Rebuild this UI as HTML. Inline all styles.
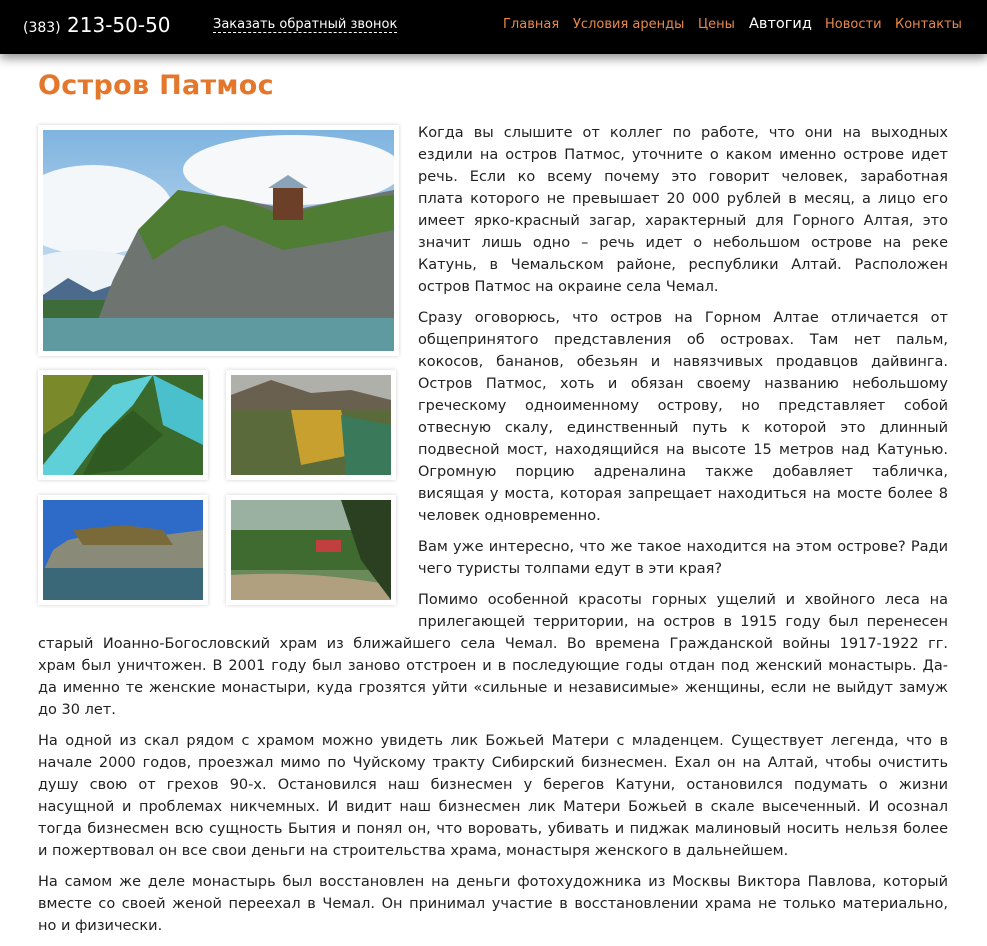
<!DOCTYPE html>
<html><head><meta charset="utf-8">
<style>
*{margin:0;padding:0;box-sizing:border-box}
body{width:987px;height:909px;overflow:hidden;background:#fff;font-family:"DejaVu Sans","Liberation Sans",sans-serif;color:#222}
.hdr{position:absolute;left:0;top:0;width:987px;height:54px;background:#000;box-shadow:0 4px 10px rgba(0,0,0,.45)}
.ph{position:absolute;left:23px;top:13px;color:#fff;font-size:20px}
.ph small{font-size:14px}
.cb{position:absolute;left:213px;top:17px;color:#fff;font-size:13px;border-bottom:1px dashed #fff;line-height:15px}
h1{position:absolute;left:38px;top:70px;font-size:27px;color:#e4772b;font-weight:bold;letter-spacing:.3px}
.c{position:absolute;left:38px;top:122px;width:910px;font-size:14.5px;line-height:22px}
.c p{margin-bottom:9px}
.c p span{display:block;white-space:nowrap;text-align:justify;text-align-last:justify}
.c p span.l{text-align-last:left}
.fl{float:left;width:380px;height:503px;position:relative}
.fr{position:absolute;background:#fff;box-shadow:0 0 4px rgba(0,0,0,.18);padding:5px}
.fr svg{display:block}
.n{position:absolute;color:#e8894a;white-space:nowrap}
</style></head><body>
<div class="hdr">
<div class="ph"><small>(383)</small> 213-50-50</div>
<div class="cb">Заказать обратный звонок</div>
</div>
<div style="position:absolute;top:17px;left:0;font-size:13px;font-family:'DejaVu Sans',sans-serif">
<span class="n" style="left:503px">Главная</span>
<span class="n" style="left:573px">Условия аренды</span>
<span class="n" style="left:698px">Цены</span>
<span class="n" style="left:749px;color:#fff;font-size:14.5px;top:-1px">Автогид</span>
<span class="n" style="left:825px">Новости</span>
<span class="n" style="left:895px">Контакты</span>
</div>
<h1>Остров Патмос</h1>
<div class="c">
<div class="fl">
<div class="fr" style="left:0;top:3px;width:361px;height:231px">
<svg width="351" height="221"><defs><linearGradient id="s" x1="0" y1="0" x2="0" y2="1"><stop offset="0" stop-color="#7fb4e0"/><stop offset="1" stop-color="#e8f0f6"/></linearGradient></defs>
<rect width="351" height="221" fill="url(#s)"/>
<ellipse cx="50" cy="80" rx="80" ry="45" fill="#f4f7fa"/><ellipse cx="250" cy="40" rx="110" ry="35" fill="#f6f8fa"/><ellipse cx="40" cy="150" rx="70" ry="30" fill="#eef3f7"/>
<path d="M0 165 L25 148 L50 162 L70 155 L70 190 L0 190Z" fill="#4b6a8c"/>
<rect x="0" y="170" width="70" height="22" fill="#3d6b3a"/>
<path d="M55 190 L70 150 L95 100 L135 60 L200 70 L250 80 L300 70 L351 60 L351 190Z" fill="#6e7570"/>
<path d="M95 100 L135 60 L200 70 L240 85 L300 70 L351 65 L351 100 L300 110 L240 120 L180 95 L140 110 L110 130Z" fill="#4f7d34"/>
<rect x="230" y="55" width="30" height="35" fill="#6b3f28"/><path d="M225 58 L245 45 L265 58Z" fill="#8aa3b8"/>
<rect x="0" y="188" width="351" height="33" fill="#5f9aa0"/>
</svg></div>
<div class="fr" style="left:0;top:248px;width:170px;height:110px">
<svg width="160" height="100"><rect width="160" height="100" fill="#3a6b2c"/><path d="M0 90 L40 40 L70 10 L110 0 L90 30 L60 60 L30 100 L0 100Z" fill="#5fd0d8"/><path d="M110 0 L160 25 L160 70 L120 50Z" fill="#4ac0cc"/><path d="M60 60 L90 35 L120 60 L80 95 L40 100Z" fill="#2f5a22"/><path d="M0 0 L50 0 L30 40 L0 60Z" fill="#7a8a2a"/></svg></div>
<div class="fr" style="left:188px;top:248px;width:170px;height:110px">
<svg width="160" height="100"><rect width="160" height="100" fill="#5a6a3a"/><rect width="160" height="30" fill="#b0b0aa"/><path d="M0 20 L40 5 L80 18 L120 15 L160 25 L160 35 L0 35Z" fill="#6a6050"/><path d="M60 35 L110 35 L120 80 L70 90Z" fill="#c8a030"/><path d="M110 40 L160 50 L160 100 L115 100Z" fill="#3a7a5a"/></svg></div>
<div class="fr" style="left:0;top:373px;width:170px;height:110px">
<svg width="160" height="100"><rect width="160" height="100" fill="#2e6ac8"/><path d="M25 40 L70 30 L120 35 L160 30 L160 70 L0 72 L10 50Z" fill="#8a8a78"/><path d="M30 30 L80 25 L120 30 L130 45 L40 45Z" fill="#7a6a3a"/><rect y="68" width="160" height="32" fill="#3a6878"/></svg></div>
<div class="fr" style="left:188px;top:373px;width:170px;height:110px">
<svg width="160" height="100"><rect width="160" height="100" fill="#6a8a5a"/><rect width="160" height="30" fill="#9ab0a0"/><path d="M0 30 L160 30 L160 70 L0 70Z" fill="#3f6a30"/><rect x="85" y="40" width="25" height="12" fill="#c04040"/><path d="M0 75 Q80 70 160 85 L160 100 L0 100Z" fill="#b0a080"/><path d="M110 0 L160 0 L160 100 L130 60Z" fill="#2a4020"/></svg></div>
</div>
<p><span>Когда вы слышите от коллег по работе, что они на выходных</span><span>ездили на остров Патмос, уточните о каком именно острове идет</span><span>речь. Если ко всему почему это говорит человек, заработная</span><span>плата которого не превышает 20 000 рублей в месяц, а лицо его</span><span>имеет ярко-красный загар, характерный для Горного Алтая, это</span><span>значит лишь одно – речь идет о небольшом острове на реке</span><span>Катунь, в Чемальском районе, республики Алтай. Расположен</span><span class="l">остров Патмос на окраине села Чемал.</span></p>
<p><span>Сразу оговорюсь, что остров на Горном Алтае отличается от</span><span>общепринятого представления об островах. Там нет пальм,</span><span>кокосов, бананов, обезьян и навязчивых продавцов дайвинга.</span><span>Остров Патмос, хоть и обязан своему названию небольшому</span><span>греческому одноименному острову, но представляет собой</span><span>отвесную скалу, единственный путь к которой это длинный</span><span>подвесной мост, находящийся на высоте 15 метров над Катунью.</span><span>Огромную порцию адреналина также добавляет табличка,</span><span>висящая у моста, которая запрещает находиться на мосте более 8</span><span class="l">человек одновременно.</span></p>
<p><span>Вам уже интересно, что же такое находится на этом острове? Ради</span><span class="l">чего туристы толпами едут в эти края?</span></p>
<p><span>Помимо особенной красоты горных ущелий и хвойного леса на</span><span>прилегающей территории, на остров в 1915 году был перенесен</span><span>старый Иоанно-Богословский храм из ближайшего села Чемал. Во времена Гражданской войны 1917-1922 гг.</span><span>храм был уничтожен. В 2001 году был заново отстроен и в последующие годы отдан под женский монастырь. Да-</span><span>да именно те женские монастыри, куда грозятся уйти «сильные и независимые» женщины, если не выйдут замуж</span><span class="l">до 30 лет.</span></p>
<p><span>На одной из скал рядом с храмом можно увидеть лик Божьей Матери с младенцем. Существует легенда, что в</span><span>начале 2000 годов, проезжал мимо по Чуйскому тракту Сибирский бизнесмен. Ехал он на Алтай, чтобы очистить</span><span>душу свою от грехов 90-х. Остановился наш бизнесмен у берегов Катуни, остановился подумать о жизни</span><span>насущной и проблемах никчемных. И видит наш бизнесмен лик Матери Божьей в скале высеченный. И осознал</span><span>тогда бизнесмен всю сущность Бытия и понял он, что воровать, убивать и пиджак малиновый носить нельзя более</span><span class="l">и пожертвовал он все свои деньги на строительства храма, монастыря женского в дальнейшем.</span></p>
<p><span>На самом же деле монастырь был восстановлен на деньги фотохудожника из Москвы Виктора Павлова, который</span><span>вместе со своей женой переехал в Чемал. Он принимал участие в восстановлении храма не только материально,</span><span class="l">но и физически.</span></p>
</div>
</body></html>
